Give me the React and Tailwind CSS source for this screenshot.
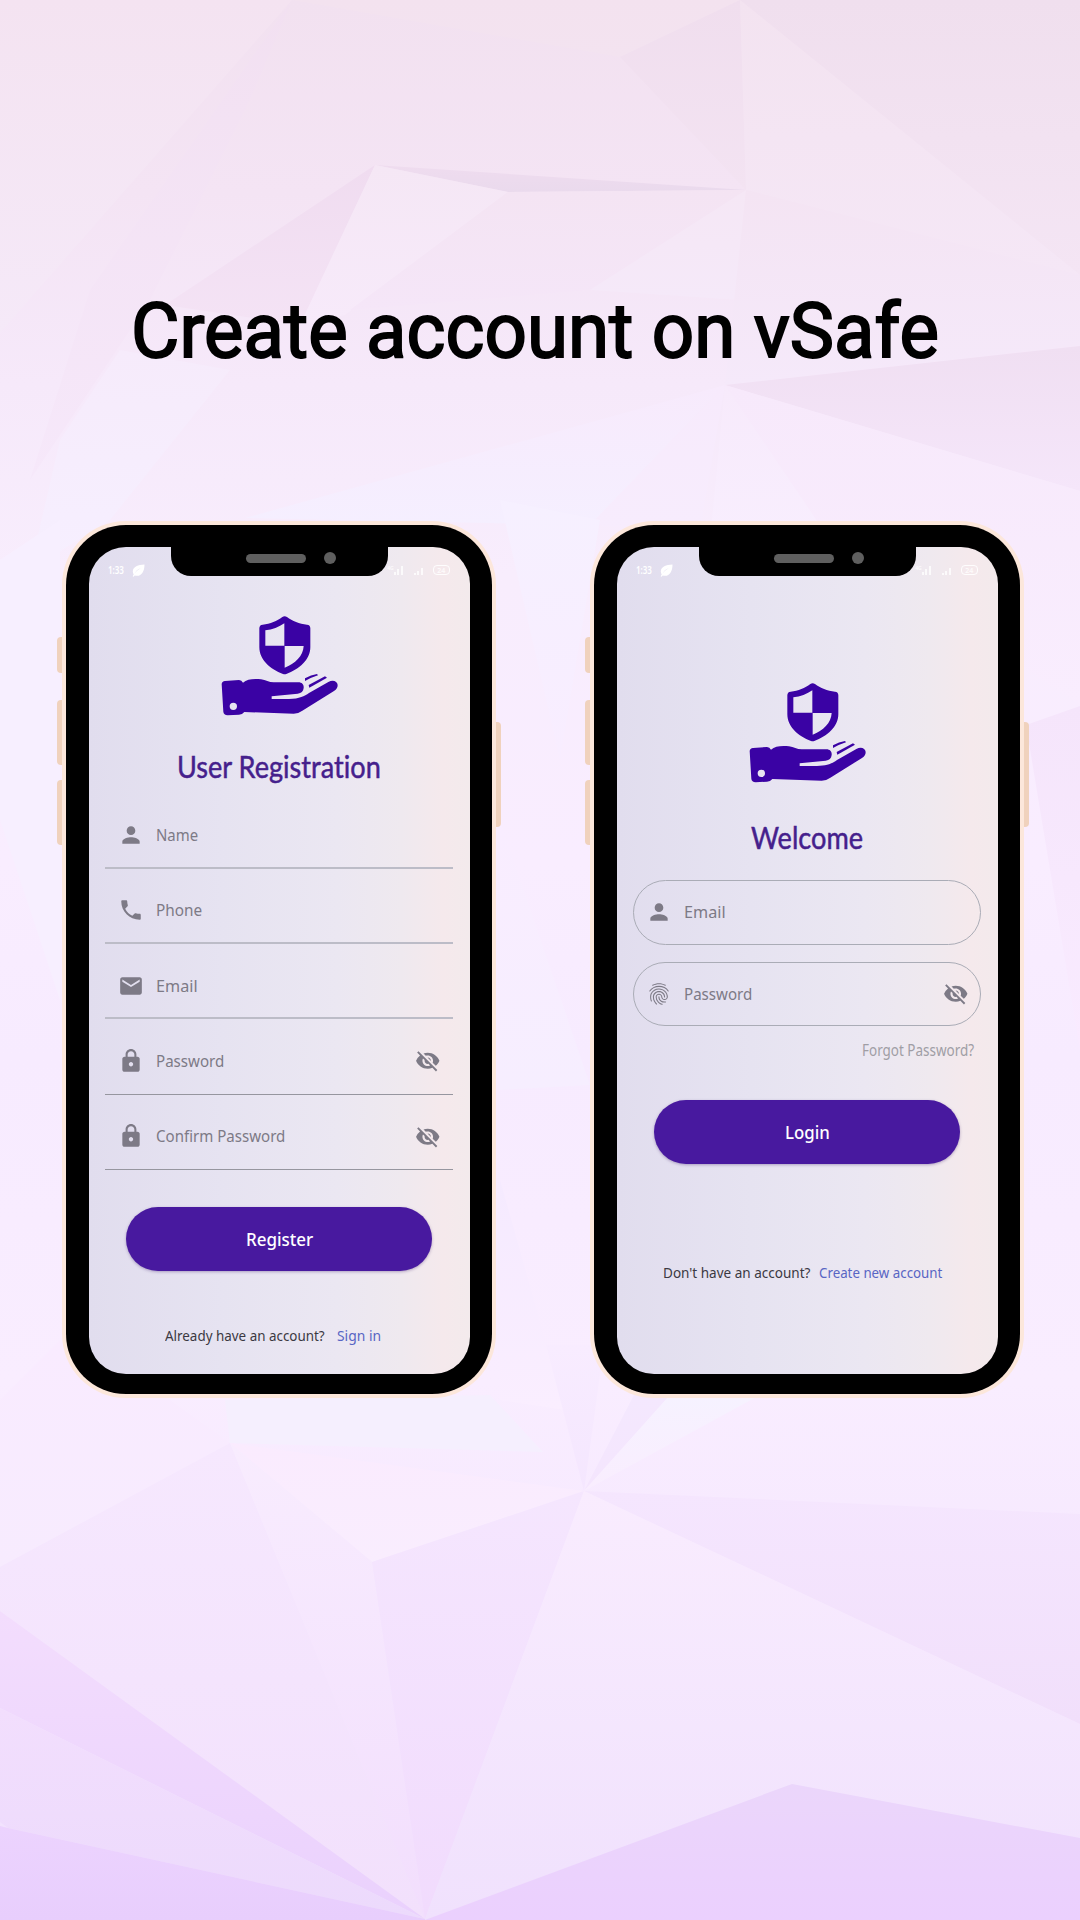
import { useLayoutEffect, useRef, useState } from "react";
import {
  MdPerson,
  MdPhone,
  MdEmail,
  MdLock,
  MdVisibilityOff,
  MdFingerprint,
} from "react-icons/md";

const SANS = "font-['Noto_Sans','Open_Sans',sans-serif]";

// One line of text condensed or widened to an exact width.
function FitText({ width, className = "", children }) {
  const ref = useRef(null);
  const [scale, setScale] = useState(1);
  useLayoutEffect(() => {
    setScale(width / ref.current.offsetWidth);
  }, [width]);
  return (
    <span className={`block shrink-0 ${className}`} style={{ width }}>
      <span
        ref={ref}
        className="inline-block origin-left whitespace-nowrap"
        style={{ transform: `scaleX(${scale})` }}
      >
        {children}
      </span>
    </span>
  );
}

// Each facet: points, top colour, bottom colour.
const FACETS = [
  ["0,0 292,0 0,333", "#f4e3f1", "#f5e9f8"],
  ["292,0 90,290 30,480 150,300 250,100", "#f2e0f1", "#f6e8fa"],
  ["292,0 620,57 740,0", "#f3e2ef", "#f3e3f0"],
  ["620,57 740,0 746,190", "#f0deee", "#f3e3f2"],
  ["740,0 1080,0 1080,275", "#f0dfee", "#f4e5f4"],
  ["740,0 1080,275 746,190", "#f3e3f0", "#f5e7f6"],
  ["375,165 746,190 508,192", "#efdcef", "#eadaed"],
  ["375,165 165,305 300,325", "#f0dcf0", "#f4e3f5"],
  ["375,165 508,192 345,315 300,325", "#f5e7f5", "#f7eafa"],
  ["508,192 746,190 590,290 350,310", "#f4e4f3", "#f5e6f8"],
  ["746,190 740,300 590,290", "#f5e7f5", "#f5e9f9"],
  ["746,190 1080,275 1080,345 725,385", "#f4e4f3", "#f5e9fa"],
  ["725,385 1080,346 1080,491", "#f0dff2", "#f5e6fa"],
  ["725,385 1080,491 1080,705 820,530", "#f7e9fb", "#f9edfe"],
  ["725,385 245,518 590,525", "#f7eafc", "#f5efff"],
  ["725,385 590,525 700,530", "#f7eafc", "#f7ecfd"],
  ["725,385 710,540 830,540", "#f7eafb", "#f8eefe"],
  ["120,350 60,440 30,570 110,520 230,370", "#f6ebfb", "#f6efff"],
  ["0,560 60,520 60,1000 0,820", "#f7efff", "#f7efff"],
  ["500,500 600,520 560,760", "#f6f0ff", "#f8edff"],
  ["1026,725 1080,706 1080,1050", "#f5e5fb", "#f9ebff"],
  ["500,820 590,1085 500,1090", "#f9edff", "#f6eeff"],
  ["500,1180 500,1400 565,1410", "#f5eaff", "#faeeff"],
  ["0,1400 60,1340 170,1400 230,1443 0,1567", "#f9ebff", "#f7ebfe"],
  ["225,1400 490,1395 543,1452 230,1443", "#f5effe", "#f5effe"],
  ["230,1443 584,1491 372,1562", "#faebfe", "#f9edfe"],
  ["546,1345 604,1345 584,1491", "#f8ecff", "#f4e6fe"],
  ["634,1395 670,1395 584,1491", "#f4e8fe", "#f4e5fd"],
  ["670,1395 760,1395 584,1491", "#f6f2ff", "#f9edfe"],
  ["584,1491 1080,1514 1080,1724", "#f5e6fe", "#f1dffb"],
  ["0,1567 230,1443 425,1919 0,1611", "#f6e8fe", "#f2e0fc"],
  ["230,1443 372,1562 425,1919", "#f8ecfe", "#f2defd"],
  ["584,1491 372,1562 425,1919", "#f5e6fe", "#f1dbfd"],
  ["584,1491 1080,1724 1080,1838 792,1784 425,1919", "#f9ecfe", "#f0e1fd"],
  ["0,1611 425,1919 0,1708", "#f3ddfd", "#ead1fd"],
  ["0,1708 425,1919 8,1828 0,1822", "#f2defd", "#ecdafc"],
  ["0,1826 8,1828 425,1919 425,1920 0,1920", "#ecd3fe", "#e8cefd"],
  ["425,1920 792,1784 1080,1838 1080,1920", "#ebd6fb", "#ebd0fe"],
];

function Backdrop() {
  return (
    <svg
      className="absolute inset-0 -z-10"
      width="1080"
      height="1920"
      viewBox="0 0 1080 1920"
      aria-hidden="true"
    >
      <defs>
        <linearGradient id="base" x1="0" y1="0" x2="0" y2="1">
          <stop offset="0" stopColor="#f2e1f0" />
          <stop offset="0.1" stopColor="#f4e4f4" />
          <stop offset="0.2" stopColor="#f6e9fa" />
          <stop offset="0.3" stopColor="#f8edfd" />
          <stop offset="0.45" stopColor="#f9edff" />
          <stop offset="0.55" stopColor="#f7ebff" />
          <stop offset="0.72" stopColor="#f9edff" />
          <stop offset="1" stopColor="#f0e0fd" />
        </linearGradient>
        {FACETS.map(([, from, to], i) => (
          <linearGradient key={i} id={`facet${i}`} x1="0" y1="0" x2="0" y2="1">
            <stop offset="0" stopColor={from} />
            <stop offset="1" stopColor={to} />
          </linearGradient>
        ))}
      </defs>
      <rect width="1080" height="1920" fill="url(#base)" />
      {FACETS.map(([points], i) => (
        <polygon key={i} points={points} fill={`url(#facet${i})`} />
      ))}
    </svg>
  );
}

function SafeLogo() {
  return (
    <svg
      className="ml-0.5 block shrink-0"
      width="130"
      height="110"
      viewBox="0 0 390 330"
      fill="#3a02a4"
      aria-label="vSafe"
    >
      <path
        fillRule="evenodd"
        d="M202 21Q209 16 216 21C232 33 253 42 276 44Q286 45 286 55V112C286 150 252 178 214 192Q209 194 204 192C166 178 133 150 133 112V55Q133 45 143 44C166 42 186 33 202 21ZM208 40C192 51 172 59 151 61V107H208ZM209 108V173C240 162 265 137 266 108Z"
      />
      <path
        fillRule="evenodd"
        d="M20 222Q21 214 30 213L72 210Q80 210 84 218C96 207 116 206 138 208C152 210 162 217 176 217H250C262 217 267 225 266 234C265 244 259 250 248 251L170 259V267H222C254 266 268 259 282 249L340 216C354 208 367 214 368 225C368 232 365 238 357 243L262 302Q250 311 236 311L88 306Q82 314 72 314L38 316Q26 315 25 305ZM55 278A11 11 0 1 0 55 300A11 11 0 1 0 55 278Z"
      />
      <path d="M270 205Q288 194 306 192L309 196Q290 202 270 213Z" />
      <path d="M281 225L330 199L336 203L283 233Z" />
    </svg>
  );
}

function Signal({ bars }) {
  return (
    <div className="flex items-end gap-[1.5px]">
      {bars.map((b, i) => (
        <i key={i} className="block w-[2px] bg-white/75" style={{ height: b }} />
      ))}
    </div>
  );
}

function StatusBar() {
  return (
    <div
      className={`absolute inset-x-0 top-[15px] flex h-4 items-center pr-5 pl-[19px] text-white ${SANS}`}
    >
      <FitText width={16} className="text-[10px] leading-4 font-semibold">
        1:33
      </FitText>
      <svg className="ml-[8px]" width="13" height="13" viewBox="0 0 13 13">
        <path
          d="M12.500.500C6 1 1.200 2.500.800 7.200C.700 8.600 1.100 9.700 1.700 10.500L.600 12.300L1.700 12.700L2.700 11.400C8.500 13.400 12.500 8.500 12.500.500ZM9 4.200C6.200 5.500 4.200 7.300 2.600 9.800C3.700 7 5.700 5 9 4.200Z"
          fill="#fff"
          fillRule="evenodd"
        />
      </svg>
      <div className="ml-auto flex items-end">
        <span className="mb-[4px] text-[5px] leading-[6px] font-semibold text-white/80">
          4G
        </span>
        <Signal bars={[3, 6, 9]} />
        <div className="w-[11px]" />
        <Signal bars={[2, 4, 7]} />
        <div className="ml-[10px] flex h-[10px] w-[17px] items-center justify-center rounded-[4px] border-[1.500px] border-white/90 text-[7px] leading-none font-semibold text-white/80">
          24
        </div>
      </div>
    </div>
  );
}

function Phone({ children }) {
  const side = "absolute w-[5px] bg-[#f0d2bd]";
  return (
    <div className="relative h-[869px] w-[425.500px] rounded-[60px] bg-black pt-[22px] pr-[22px] pb-[20.500px] pl-[22.500px] shadow-[0_0_0_4px_#fce7db]">
      <div className={`${side} top-[112px] -left-[9px] h-9 rounded-l-[4px]`} />
      <div className={`${side} top-[175px] -left-[9px] h-[65px] rounded-l-[4px]`} />
      <div className={`${side} top-[255px] -left-[9px] h-[65px] rounded-l-[4px]`} />
      <div className={`${side} top-[197px] -right-[9px] h-[105px] rounded-r-[4px]`} />
      <div className="relative flex h-full w-full flex-col items-center overflow-hidden rounded-[37px] bg-[linear-gradient(90deg,#e1ddee_0%,#e6e3f1_35%,#ebe7f2_65%,#efe9ef_82%,#f5e9ec_93%,#f3eaec_100%)]">
        <StatusBar />
        <div className="absolute top-[-2px] left-[82px] h-[31px] w-[217px] rounded-b-[20px] bg-black">
          <div className="absolute top-[8.500px] left-[75.500px] h-[9px] w-[60px] rounded-full bg-[#5f5f5f]" />
          <div className="absolute top-[7px] left-[153px] size-3 rounded-full bg-[#5f5f5f]" />
        </div>
        {children}
      </div>
    </div>
  );
}

function Heading({ width, children }) {
  return (
    <h2 className="font-['Lato',sans-serif] text-[31.500px] leading-10 text-[#45208c] [font-variant-ligatures:none] [-webkit-text-stroke:0.500px_#45208c]">
      <FitText width={width}>{children}</FitText>
    </h2>
  );
}

function Field({ icon: Icon, label, width, hidden, className }) {
  return (
    <label className={`flex w-[348px] items-center text-[#7d7a86] ${className}`}>
      <Icon size={26} className="shrink-0" />
      <FitText width={width} className={`ml-[11.500px] text-base leading-5 ${SANS}`}>
        {label}
      </FitText>
      {hidden && <MdVisibilityOff size={25.5} className="ml-auto" />}
    </label>
  );
}

function PillButton({ width, children }) {
  return (
    <button
      className={`flex h-16 w-[305.500px] shrink-0 items-center justify-center rounded-full bg-[#48199f] text-[18.500px] font-medium text-white shadow-[0_1px_3px_rgba(60,30,110,0.35)] ${SANS}`}
    >
      <FitText width={width} className="leading-6">
        {children}
      </FitText>
    </button>
  );
}

function Footer({ text, textWidth, link, linkWidth, className }) {
  return (
    <div className={`flex text-[14.500px] leading-5 ${SANS} ${className}`}>
      <FitText width={textWidth} className="text-[#3b3942]">
        {text}
      </FitText>
      <FitText width={linkWidth} className="text-[#5865c4]">
        {link}
      </FitText>
    </div>
  );
}

const ROWS = [
  { icon: MdPerson, label: "Name", width: 42 },
  { icon: MdPhone, label: "Phone", width: 46 },
  { icon: MdEmail, label: "Email", width: 41.5 },
  { icon: MdLock, label: "Password", width: 68, hidden: true },
  { icon: MdLock, label: "Confirm Password", width: 129, hidden: true },
];

export default function App() {
  return (
    <main className="relative isolate h-[1920px] w-[1080px] overflow-hidden">
      <Backdrop />
      <h1 className="flex justify-center pt-[283px] pr-[10px] pb-px font-['Roboto',sans-serif] text-[75.500px] leading-[96px] font-normal text-black [-webkit-text-stroke:1.900px_#000]">
        <FitText width={808}>Create account on vSafe</FitText>
      </h1>
      <section className="flex gap-[102.500px] pt-[145px] pl-[66.200px]">
        <Phone>
          <div className="mt-[63px]">
            <SafeLogo />
          </div>
          <div className="mt-[26px]">
            <Heading width={204}>User Registration</Heading>
          </div>
          <form className="mt-[7.500px]">
            {ROWS.map((row, i) => (
              <Field
                key={row.label}
                {...row}
                className={
                  i < 3
                    ? "h-[75.300px] border-b-2 border-[#bcbcc7] pt-[10px] pr-[13px] pl-[13px]"
                    : "h-[75.300px] border-b border-[#96969f] pt-[9px] pr-[13px] pl-[13px]"
                }
              />
            ))}
          </form>
          <div className="mt-[37.500px]">
            <PillButton width={67}>Register</PillButton>
          </div>
          <Footer
            text="Already have an account?"
            textWidth={160}
            link="Sign in"
            linkWidth={44}
            className="mt-[54px] mr-3 gap-[12.500px]"
          />
        </Phone>
        <Phone>
          <div className="mt-[129.500px]">
            <SafeLogo />
          </div>
          <div className="mt-[30px]">
            <Heading width={112}>Welcome</Heading>
          </div>
          <form className="mt-[23.500px] flex flex-col items-center gap-[17px]">
            <Field
              icon={MdPerson}
              label="Email"
              width={41.5}
              className="h-[64.500px] rounded-full border border-[#aaacb6] px-3"
            />
            <Field
              icon={MdFingerprint}
              label="Password"
              width={68}
              hidden
              className="h-[64.500px] rounded-full border border-[#aaacb6] px-3"
            />
          </form>
          <div className={`mt-[14px] mr-[24px] self-end text-[15.500px] leading-5 text-[#a09ea5] ${SANS}`}>
            <FitText width={112}>Forgot Password?</FitText>
          </div>
          <div className="mt-[40px]">
            <PillButton width={44.5}>Login</PillButton>
          </div>
          <Footer
            text="Don't have an account?"
            textWidth={147.5}
            link="Create new account"
            linkWidth={123}
            className="mt-[98px] mr-[9px] gap-[8px]"
          />
        </Phone>
      </section>
    </main>
  );
}
